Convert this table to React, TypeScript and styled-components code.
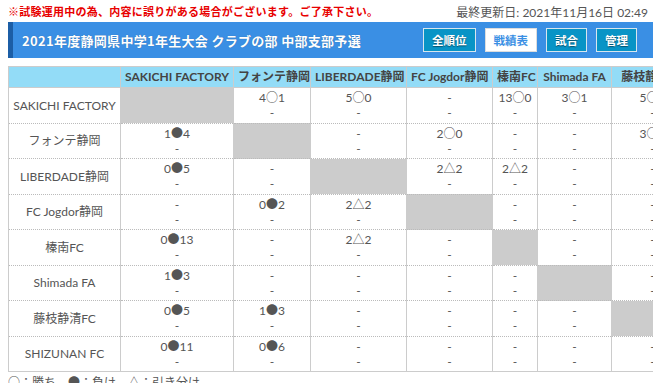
import styled, { createGlobalStyle } from 'styled-components';

const GlobalStyle = createGlobalStyle`
    body {
        margin: 4px 8px 8px;
        background: #fff;
        font-family: Lato, "Noto Sans CJK JP", sans-serif;
        color: #555;
    }
`;

const Page = styled.div`
    width: 645px;
`;

const TopLine = styled.div`
    display: flex;
    justify-content: space-between;
    align-items: center;
    height: 14px;
    margin-bottom: 4px;
    padding-right: 5px;
`;

const Notice = styled.span`
    font-family: "Noto Sans CJK JP", sans-serif;
    font-size: 11px;
    letter-spacing: 0.25px;
    font-weight: 700;
    color: #e80000;
`;

const Updated = styled.span`
    font-family: Lato, "Noto Sans CJK JP", sans-serif;
    font-size: 12px;
    color: #555;
`;

const TitleBar = styled.div`
    display: flex;
    align-items: center;
    height: 36px;
    background: #3a8fe4;
    border-left: 5px solid #1c5ea6;
    padding: 0 16px 0 9px;
`;

const Title = styled.h1`
    flex: 1;
    margin: 0;
    font-family: "Noto Sans CJK JP", sans-serif;
    font-size: 13px;
    letter-spacing: 0.3px;
    font-weight: 700;
    color: #fff;
    text-shadow: 0 0 1px rgba(0, 0, 0, 0.3);
`;

const Nav = styled.div`
    display: flex;
    gap: 9px;
`;

const NavButton = styled.div<{ $active?: boolean }>`
    display: flex;
    align-items: center;
    height: 22px;
    padding: 0 8px;
    border: 1px solid ${p => (p.$active ? '#ddd' : '#d8e6ee')};
    background: ${p => (p.$active ? '#fff' : '#0894c6')};
    color: ${p => (p.$active ? '#3a8fe4' : '#fff')};
    font-family: "Noto Sans CJK JP", sans-serif;
    font-size: 11.5px;
    font-weight: 700;
    text-shadow: ${p => (p.$active ? 'none' : '0 1px 1px rgba(0,0,0,0.45)')};
`;

const TableWrap = styled.div`
    margin-top: 8px;
    overflow: hidden;
`;

const Table = styled.table`
    border-collapse: collapse;
    table-layout: fixed;
    width: 776px;
    border: 1px solid #ccc;
    font-size: 12px;
`;

const HeadCell = styled.th`
    background: #93dcf7;
    color: #444;
    font-weight: 700;
    white-space: nowrap;
    padding: 3px 4px;
    line-height: 14px;
    border: 1px solid #ccc;
    text-align: center;
`;

const RowLabel = styled.td`
    color: #555;
    text-align: center;
    white-space: nowrap;
    line-height: 15px;
    border-left: 1px solid #ccc;
    border-right: 1px solid #ccc;
    border-bottom: 1px dotted #bbb;
`;

const Cell = styled.td<{ $self?: boolean }>`
    background: ${p => (p.$self ? '#cccccc' : '#fff')};
    text-align: center;
    vertical-align: top;
    padding: 2px 4px 2.5px;
    line-height: 15px;
    color: #555;
    white-space: nowrap;
    border-left: 1px solid #ccc;
    border-right: 1px solid #ccc;
    border-bottom: 1px dotted #bbb;
`;

// CJK glyph for the result mark; zero line-height so it does not grow the row
const Mark = styled.span`
    font-family: "Noto Sans CJK JP", sans-serif;
    font-size: 12px;
    line-height: 0;
`;

const Legend = styled.div`
    margin-top: 3px;
    font-family: "Noto Sans CJK JP", sans-serif;
    font-size: 12px;
    line-height: 14px;
    color: #555;
`;

const teams = ['SAKICHI FACTORY', 'フォンテ静岡', 'LIBERDADE静岡', 'FC Jogdor静岡', '榛南FC', 'Shimada FA', '藤枝静清FC', 'SHIZUNAN FC'];
const widths = [112, 113, 77, 96, 86, 45, 74, 82, 91];

// score strings: "4○1" etc, '' for self, '-' for not played
const results: string[][] = [
    ['', '4○1', '5○0', '-', '13○0', '3○1', '5○0', '11○0'],
    ['1●4', '', '-', '2○0', '-', '-', '3○1', '6○0'],
    ['0●5', '-', '', '2△2', '2△2', '-', '-', '-'],
    ['-', '0●2', '2△2', '', '-', '-', '-', '-'],
    ['0●13', '-', '2△2', '-', '', '-', '-', '-'],
    ['1●3', '-', '-', '-', '-', '', '-', '-'],
    ['0●5', '1●3', '-', '-', '-', '-', '', '-'],
    ['0●11', '0●6', '-', '-', '-', '-', '-', ''],
];

const Score = ({ value }: { value: string }) => {
    const match = value.match(/^(\d+)([○●△])(\d+)$/);
    if (!match) return <>{value}</>;
    return (
        <>
            {match[1]}
            <Mark>{match[2]}</Mark>
            {match[3]}
        </>
    );
};

const App = () => (
    <Page>
        <GlobalStyle />
        <TopLine>
            <Notice>※試験運用中の為、内容に誤りがある場合がございます。ご了承下さい。</Notice>
            <Updated>最終更新日: 2021年11月16日 02:49</Updated>
        </TopLine>
        <TitleBar>
            <Title>2021年度静岡県中学1年生大会 クラブの部 中部支部予選</Title>
            <Nav>
                <NavButton>全順位</NavButton>
                <NavButton $active>戦績表</NavButton>
                <NavButton>試合</NavButton>
                <NavButton>管理</NavButton>
            </Nav>
        </TitleBar>
        <TableWrap>
            <Table>
                <colgroup>
                    {widths.map((w, i) => (
                        <col key={i} style={{ width: w }} />
                    ))}
                </colgroup>
                <thead>
                    <tr>
                        <HeadCell />
                        {teams.map(team => (
                            <HeadCell key={team}>{team}</HeadCell>
                        ))}
                    </tr>
                </thead>
                <tbody>
                    {teams.map((team, row) => (
                        <tr key={team}>
                            <RowLabel>{team}</RowLabel>
                            {results[row].map((value, col) =>
                                col === row ? (
                                    <Cell key={col} $self />
                                ) : (
                                    <Cell key={col}>
                                        <div>
                                            <Score value={value} />
                                        </div>
                                        <div>-</div>
                                    </Cell>
                                )
                            )}
                        </tr>
                    ))}
                </tbody>
            </Table>
        </TableWrap>
        <Legend>○：勝ち　●：負け　△：引き分け</Legend>
    </Page>
);

export default App;
